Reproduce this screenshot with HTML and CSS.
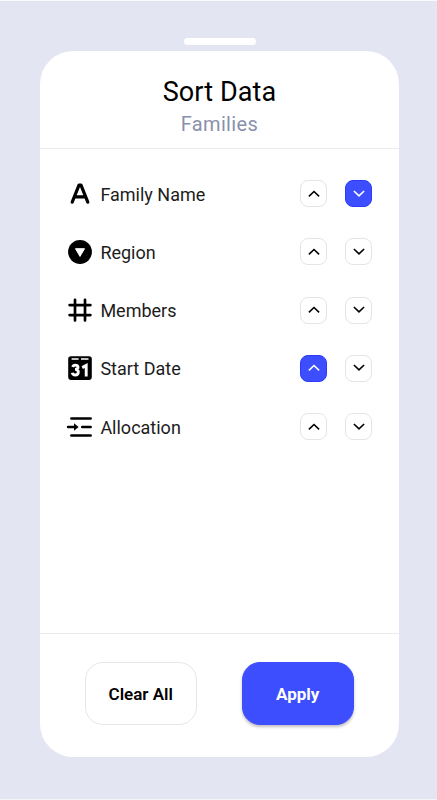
FILE: index.html
```
<!DOCTYPE html>
<html lang="en">
<head>
<meta charset="utf-8">
<title>Sort Data</title>
<link rel="stylesheet" href="styles.css">
</head>
<body>
<svg width="0" height="0" class="defs" aria-hidden="true">
  <symbol id="up" viewBox="0 0 14 14"><path d="M1.9 9.3 7 4.5l5.1 4.8"/></symbol>
  <symbol id="down" viewBox="0 0 14 14"><path d="M1.9 4 7 8.8 12.1 4"/></symbol>
</svg>
<div class="screen">
  <div class="handle"></div>
  <main class="sheet">
    <header class="head">
      <h1>Sort Data</h1>
      <p>Families</p>
    </header>
    <section class="list">
      <div class="row">
        <svg class="icon" viewBox="0 0 28 28"><path class="line heavy" d="M6.2 22.2 13 5.2h2l6.8 17M9 16.9h10"/></svg>
        <span class="label">Family Name</span>
        <button class="sort"><svg><use href="#up"/></svg></button>
        <button class="sort on"><svg><use href="#down"/></svg></button>
      </div>
      <div class="row">
        <svg class="icon" viewBox="0 0 28 28"><circle cx="14" cy="14" r="11.9"/><path class="cut" d="M9.5 10.7h9L14 18.4z"/></svg>
        <span class="label">Region</span>
        <button class="sort"><svg><use href="#up"/></svg></button>
        <button class="sort"><svg><use href="#down"/></svg></button>
      </div>
      <div class="row">
        <svg class="icon" viewBox="0 0 28 28"><path class="line" d="M9 3.8v20.6M19 3.8v20.6M3.6 9.1h20.8M3.6 19.1h20.8"/></svg>
        <span class="label">Members</span>
        <button class="sort"><svg><use href="#up"/></svg></button>
        <button class="sort"><svg><use href="#down"/></svg></button>
      </div>
      <div class="row">
        <svg class="icon" viewBox="0 0 28 28"><rect x="2.2" y="2.3" width="23.6" height="23.6" rx="2.8"/><path class="slot" d="M5.6 5h7M15 5h7.5"/><path class="digits" d="M6.7 13c.4-1.4 1.3-1.9 2.6-1.9 1.7 0 2.7.8 2.7 2.1 0 1.4-1 2.2-3 2.2 2.2 0 3.3.9 3.3 2.6 0 1.9-1.2 3-3 3-1.6 0-2.7-.8-3-2.3M16.2 13.6l4-2.1v11"/></svg>
        <span class="label">Start Date</span>
        <button class="sort on"><svg><use href="#up"/></svg></button>
        <button class="sort"><svg><use href="#down"/></svg></button>
      </div>
      <div class="row">
        <svg class="icon" viewBox="0 0 28 28"><path class="line" d="M5.4 5.5h19.2M16.3 14h8.3M5.4 22.5h19.2M2.2 14h6.5"/><path d="M8 10.2 12.6 14 8 17.8z"/></svg>
        <span class="label">Allocation</span>
        <button class="sort"><svg><use href="#up"/></svg></button>
        <button class="sort"><svg><use href="#down"/></svg></button>
      </div>
    </section>
    <footer class="foot">
      <button class="action">Clear All</button>
      <button class="action primary">Apply</button>
    </footer>
  </main>
</div>
</body>
</html>
```
FILE: styles.css
```
* { box-sizing: border-box; }
body { margin: 0; font-family: Roboto, sans-serif; color: #000; }
.defs { display: none; }
.screen {
  height: 800px;
  padding-top: 37px;
  background: #e3e6f2;
  border-top: 1px solid #fafafc;
  border-bottom: 1px solid #f3f4f9;
}
.handle { width: 72px; height: 6.5px; margin: 0 0 6.5px 183.5px; border-radius: 4px; background: #fff; }
.sheet {
  display: flex;
  flex-direction: column;
  width: 359.5px;
  height: 706px;
  margin-left: 39.7px;
  border-radius: 33px;
  background: #fff;
}
.head { height: 98px; padding-top: 24px; border-bottom: 1.5px solid #ebebee; text-align: center; }
h1 { margin: 0; font-size: 27px; line-height: 34px; font-weight: 400; letter-spacing: .1px; }
.head p { margin: 2px 0 0; font-size: 20px; line-height: 26px; color: #8990ac; letter-spacing: .35px; }
.list { flex: 1; padding: 15.5px 27px 0 26px; }
.row { display: flex; align-items: center; height: 58.25px; }
.icon { width: 28px; height: 28px; }
.line { fill: none; stroke: #000; stroke-width: 2.7; stroke-linecap: round; stroke-linejoin: round; }
.heavy { stroke-width: 3.2; }
.cut { fill: #fff; stroke: #fff; stroke-width: 1; stroke-linejoin: round; }
.slot { stroke: #fff; stroke-width: 1.7; }
.digits { fill: none; stroke: #fff; stroke-width: 2.9; }
.label { flex: 1; margin-left: 6.7px; font-size: 18px; line-height: 24px; padding-top: 2px; color: #1c1c1c; }
.sort {
  display: flex;
  align-items: center;
  justify-content: center;
  width: 27px;
  height: 27px;
  margin-left: 17.8px;
  padding: 0;
  border: 1px solid #e4e4ea;
  border-radius: 8px;
  background: #fff;
  color: #000;
}
.sort svg { width: 14px; height: 14px; fill: none; stroke: currentColor; stroke-width: 1.6; }
.on { background: #3d4efe; border-color: #2c3bfa; color: #fff; }
.foot { display: flex; gap: 45px; height: 124px; padding: 28px 0 0 45px; border-top: 1.5px solid #ebebee; }
.action {
  width: 112px;
  height: 63px;
  padding: 1px 0 0;
  border: 1px solid #e6e6ea;
  border-radius: 18px;
  background: #fff;
  font: 600 17px/24px Roboto, sans-serif;
  color: #000;
}
.primary { background: #3d4efe; border-color: #3d4efe; color: #fff; font-weight: 700; box-shadow: 0 2px 3px rgba(0, 0, 0, .25); }
```
